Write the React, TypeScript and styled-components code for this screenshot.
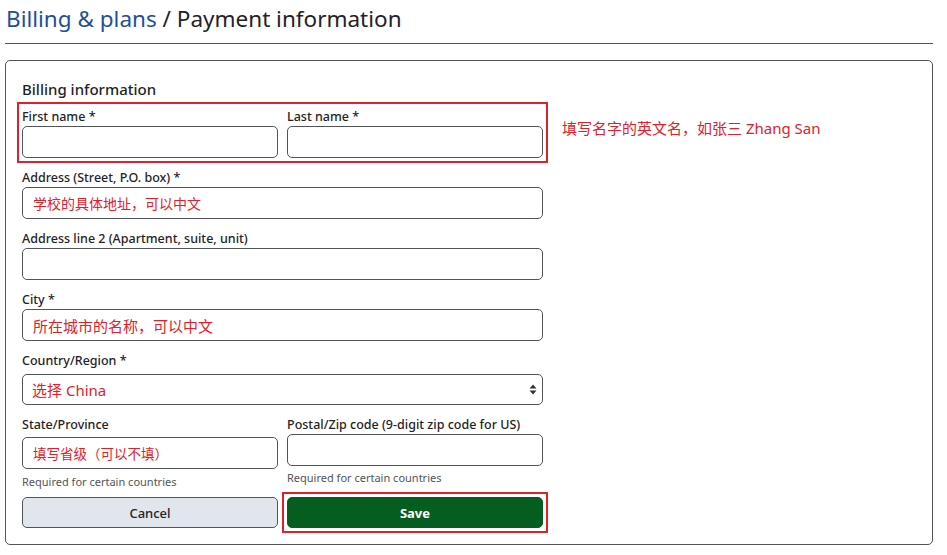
import React from "react";
import styled, { createGlobalStyle } from "styled-components";

const Global = createGlobalStyle`
  html, body { margin: 0; padding: 0; background: #fff; }
  body { font-family: "Noto Sans", "Noto Sans CJK SC", sans-serif; color: #1f2328; }
  * { box-sizing: border-box; }
`;

const Page = styled.div`
  width: 947px;
  padding: 3px 14px 9px 5px;
`;

const Title = styled.h1`
  margin: 0;
  padding-left: 1px;
  font-size: 22.5px;
  font-weight: 400;
  line-height: 32px;
  color: #1f2328;
`;

const Crumb = styled.a`
  color: #1d4f9c;
  text-decoration: none;
`;

const Rule = styled.hr`
  margin: 8px 0 16px;
  border: 0;
  border-top: 1px solid #50555c;
`;

const Card = styled.section`
  border: 1px solid #50555c;
  border-radius: 5px;
  padding: 18px 16px 16px;
  display: grid;
  grid-template-columns: 521px 1fr;
  column-gap: 19px;
  align-items: start;
`;

const Form = styled.div`
  display: flex;
  flex-direction: column;
`;

const Heading = styled.h2`
  margin: 0 0 8px;
  font-size: 15px;
  font-weight: 500;
  line-height: 20px;
`;

const Highlight = styled.div`
  margin: -5px;
  padding: 3px;
  border: 2px solid #e3202a;
`;

const Row = styled.div`
  display: grid;
  grid-template-columns: 256px 256px;
  column-gap: 9px;
  align-items: start;
`;

const Field = styled.div<{ $gap?: number }>`
  display: flex;
  flex-direction: column;
  gap: ${(p) => p.$gap ?? 0}px;
`;

const Stack = styled.div`
  display: flex;
  flex-direction: column;
  gap: 10px;
  margin-top: 10px;
`;

const Label = styled.label`
  font-size: 12.5px;
  font-weight: 500;
  line-height: 18px;
  padding-top: 1px;
  color: #1f2328;
`;

const Input = styled.input<{ $size?: number }>`
  height: 32px;
  width: 100%;
  border: 1px solid #50555c;
  border-radius: 5px;
  padding: 0 10px;
  font-family: "Noto Sans", "Noto Sans CJK SC", sans-serif;
  font-size: ${(p) => p.$size ?? 14}px;
  color: #e3202a;
  background: #fff;
  outline: none;
`;

const SelectWrap = styled.div`
  position: relative;
`;

const Select = styled.select`
  appearance: none;
  -webkit-appearance: none;
  width: 100%;
  height: 31px;
  border: 1px solid #50555c;
  border-radius: 5px;
  padding: 0 30px 0 9px;
  font-family: "Noto Sans", "Noto Sans CJK SC", sans-serif;
  font-size: 15px;
  color: #e3202a;
  background: #fff;
  outline: none;
`;

const Arrows = styled.svg`
  position: absolute;
  right: 6px;
  top: 10px;
  pointer-events: none;
`;

const Help = styled.div<{ $top: number }>`
  font-size: 11px;
  line-height: 12px;
  color: #50555c;
  margin-top: ${(p) => p.$top}px;
`;

const Buttons = styled.div`
  display: grid;
  grid-template-columns: 256px 256px;
  column-gap: 9px;
  margin-top: 9px;
`;

const Button = styled.button<{ $primary?: boolean }>`
  height: 31px;
  border-radius: 5px;
  border: 1px solid ${(p) => (p.$primary ? "#075e21" : "#50555c")};
  background: ${(p) => (p.$primary ? "#065d20" : "#e1e5ec")};
  color: ${(p) => (p.$primary ? "#fff" : "#1f2328")};
  font-family: "Noto Sans", sans-serif;
  font-size: 13px;
  font-weight: ${(p) => (p.$primary ? 700 : 500)};
  width: 100%;
`;

const SaveBox = styled.div`
  margin: -5px;
  padding: 3px;
  border: 2px solid #e3202a;
`;

const Note = styled.div`
  margin-top: 39px;
  font-size: 15px;
  line-height: 20px;
  color: #e3202a;
  font-family: "Noto Sans", "Noto Sans CJK SC", sans-serif;
`;

export default function App() {
  return (
    <Page>
      <Global />
      <Title>
        <Crumb href="#">Billing &amp; plans</Crumb> / Payment information
      </Title>
      <Rule />
      <Card>
        <Form>
          <Heading>Billing information</Heading>
          <Highlight>
            <Row>
              <Field>
                <Label>First name *</Label>
                <Input readOnly />
              </Field>
              <Field>
                <Label>Last name *</Label>
                <Input readOnly />
              </Field>
            </Row>
          </Highlight>
          <Stack>
            <Field>
              <Label>Address (Street, P.O. box) *</Label>
              <Input readOnly value="学校的具体地址，可以中文" $size={14} />
            </Field>
            <Field>
              <Label>Address line 2 (Apartment, suite, unit)</Label>
              <Input readOnly />
            </Field>
            <Field>
              <Label>City *</Label>
              <Input readOnly value="所在城市的名称，可以中文" $size={15} />
            </Field>
            <Field $gap={4}>
              <Label>Country/Region *</Label>
              <SelectWrap>
                <Select defaultValue="cn">
                  <option value="cn">选择 China</option>
                </Select>
                <Arrows width="8" height="11" viewBox="0 0 8 11">
                  <path d="M4 0.5 L7.5 4.5 H0.5 Z" fill="#333" />
                  <path d="M4 10.5 L7.5 6.5 H0.5 Z" fill="#333" />
                </Arrows>
              </SelectWrap>
            </Field>
            <Row>
              <Field $gap={3}>
                <Label>State/Province</Label>
                <Input readOnly value="填写省级（可以不填）" $size={13.5} />
                <Help $top={4}>Required for certain countries</Help>
              </Field>
              <Field>
                <Label>Postal/Zip code (9-digit zip code for US)</Label>
                <Input readOnly />
                <Help $top={6}>Required for certain countries</Help>
              </Field>
            </Row>
          </Stack>
          <Buttons>
            <Button>Cancel</Button>
            <SaveBox>
              <Button $primary>Save</Button>
            </SaveBox>
          </Buttons>
        </Form>
        <Note>填写名字的英文名，如张三 Zhang San</Note>
      </Card>
    </Page>
  );
}
